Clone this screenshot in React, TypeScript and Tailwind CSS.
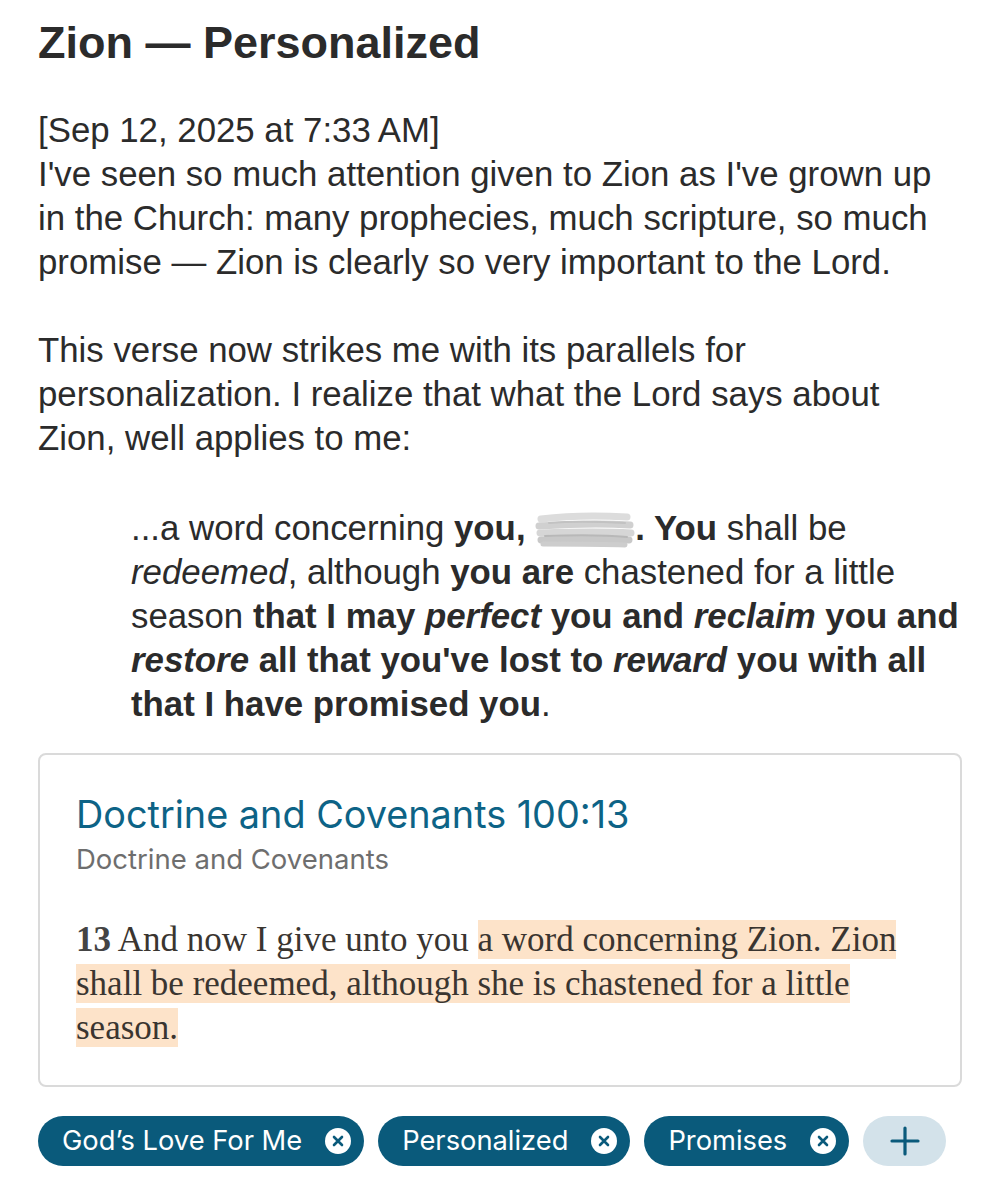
function Redacted() {
  return (
    <svg
      width="100"
      height="38"
      viewBox="0 0 100 38"
      className="inline-block align-[-9px]"
      aria-hidden="true"
    >
      <g fill="none" strokeLinecap="round">
        <path d="M6 8 C30 5, 60 4, 92 6" stroke="#dcdcdc" strokeWidth="7" />
        <path d="M4 15 C34 13, 66 12, 95 14" stroke="#d0d0d0" strokeWidth="7" />
        <path d="M5 22 C35 21, 64 20, 96 22" stroke="#d6d6d6" strokeWidth="7" />
        <path d="M6 29 C36 28, 66 28, 94 29" stroke="#c8c8c8" strokeWidth="7" />
        <path d="M14 12 C40 10, 70 11, 90 12" stroke="#c2c2c2" strokeWidth="2" />
        <path d="M10 25 C40 24, 70 24, 92 26" stroke="#b8b8b8" strokeWidth="2" />
        <path d="M8 33 C38 33, 68 33, 90 34" stroke="#cdcdcd" strokeWidth="5" />
      </g>
    </svg>
  )
}

function CloseDot() {
  return (
    <svg width="26" height="26" viewBox="0 0 26 26" aria-hidden="true">
      <circle cx="13" cy="13" r="13" fill="#ffffff" />
      <path
        d="M9 9 L17 17 M17 9 L9 17"
        stroke="#0a5a7b"
        strokeWidth="2.6"
        strokeLinecap="round"
      />
    </svg>
  )
}

function Tag({ label }: { label: string }) {
  return (
    <div className="flex h-[50px] items-center gap-[23px] rounded-full bg-[#0a5a7b] pl-[24px] pr-[13px]">
      <span className="font-['Inter',sans-serif] text-[27.3px] text-white">{label}</span>
      <CloseDot />
    </div>
  )
}

export default function App() {
  return (
    <div className="min-h-[1200px] w-[1000px] bg-white px-[38px] pt-4 font-['Liberation_Sans',Arial,sans-serif] text-[#2b2b2b]">
      <h1 className="text-[45px] font-bold leading-[54px]">Zion — Personalized</h1>

      <div className="mt-[38px] text-[34.8px] leading-[44px]">
        <p>
          [Sep 12, 2025 at 7:33{'\u202F'}AM]
          <br />
          I've seen so much attention given to Zion as I've grown up in the Church: many
          prophecies, much scripture, so much promise — Zion is clearly so very important to the
          Lord.
        </p>

        <p className="mt-[44px]">
          This verse now strikes me with its parallels for personalization. I realize that what
          the Lord says about Zion, well applies to me:
        </p>

        <blockquote className="ml-[93px] mt-[46px]">
          ...a word concerning <b>you,</b> <Redacted />
          <b>. You</b> shall be <i>redeemed</i>, although <b>you are</b> chastened for a little
          season{' '}
          <b>
            that I may <i>perfect</i> you and <i>reclaim</i> you and <i>restore</i> all that
            you've lost to <i>reward</i> you with all that I have promised you
          </b>
          .
        </blockquote>
      </div>

      <div className="mt-[27px] rounded-lg border-2 border-[#dadada] px-[36px] pb-[35px] pt-[36px]">
        <h2 className="font-['Inter',sans-serif] text-[37.8px] leading-[46px] text-[#0d6386]">
          Doctrine and Covenants 100:13
        </h2>
        <p className="mt-1 font-['Inter',sans-serif] text-[27.5px] leading-[36px] text-[#6e6e6e]">
          Doctrine and Covenants
        </p>
        <p className="mt-[41px] font-['Liberation_Serif',serif] text-[35px] leading-[44px] text-[#3a3530]">
          <b className="text-[#444]">13</b> And now I give unto you{' '}
          <span className="bg-[#fde3c9]">
            a word concerning Zion. Zion shall be redeemed, although she is chastened for a little
            season.
          </span>
        </p>
      </div>

      <div className="mt-[29px] flex gap-[14px]">
        <Tag label="God’s Love For Me" />
        <Tag label="Personalized" />
        <Tag label="Promises" />
        <button className="flex h-[50px] w-[83px] items-center justify-center rounded-full bg-[#d3e2ea]">
          <svg width="30" height="30" viewBox="0 0 30 30" aria-hidden="true">
            <path
              d="M15 2 V28 M2 15 H28"
              stroke="#0a5a7b"
              strokeWidth="3.2"
              strokeLinecap="round"
            />
          </svg>
        </button>
      </div>
    </div>
  )
}
